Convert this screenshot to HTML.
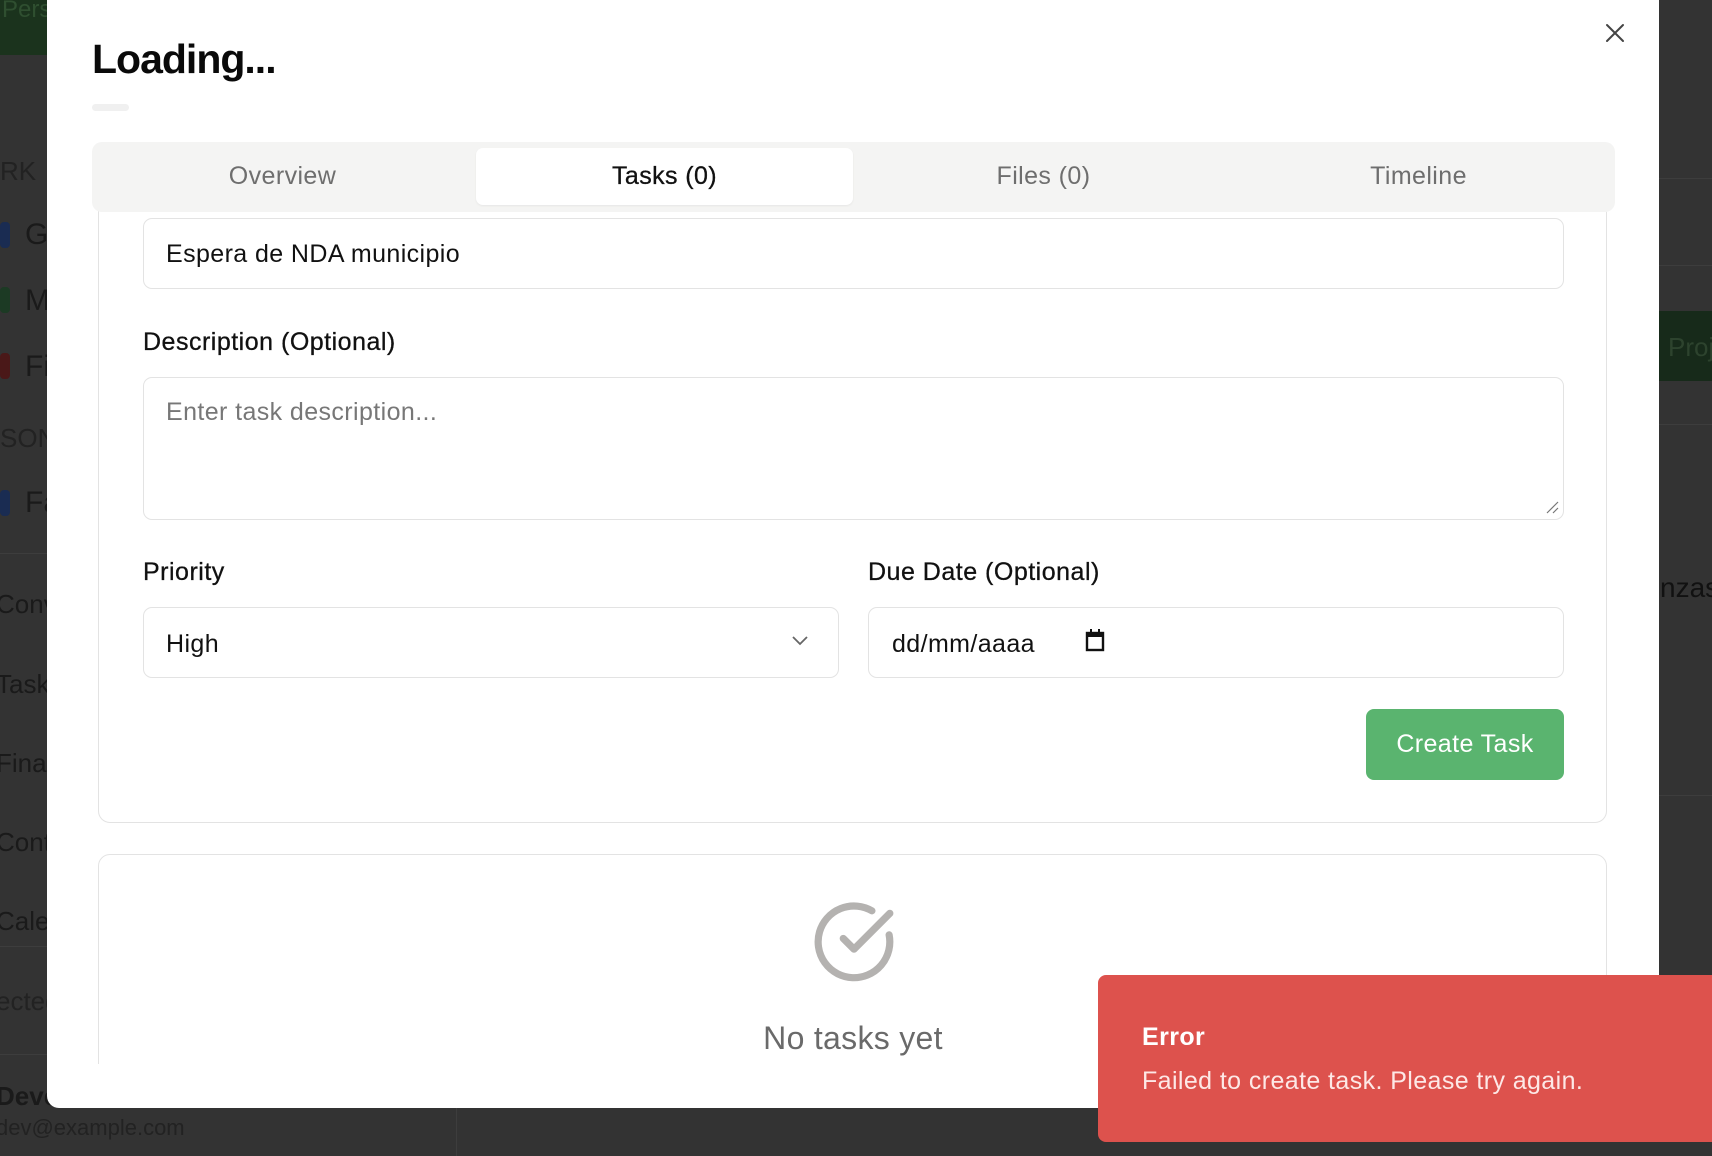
<!DOCTYPE html>
<html><head><meta charset="utf-8"><style>
*{box-sizing:border-box;margin:0;padding:0}
body{width:1712px;height:1156px;overflow:hidden;background:#333;font-family:"Liberation Sans",sans-serif;position:relative}
.a{position:absolute;white-space:nowrap}
.bg{color:#1a1a1a;font-size:26px}
.line{position:absolute;height:1px;background:#3d3d3d}
.modal{position:absolute;left:47px;top:-20px;width:1612px;height:1128px;background:#fff;border-radius:0 0 12px 12px;overflow:hidden}
.box{position:absolute;border:1px solid #e3e3e3;border-radius:9px;background:#fff}
.lbl{position:absolute;font-size:25px;color:#111;letter-spacing:0.5px;-webkit-text-stroke:0.3px #111}
.t{font-size:25px;letter-spacing:0.4px}
</style></head><body>
<div class="a" style="left:0;top:0;width:60px;height:55px;background:#1b331d"></div>
<div class="a" style="left:2px;top:-4px;font-size:24px;color:#2f4f30">Pers</div>
<div class="a bg" style="left:0;top:156px;color:#222">RK</div>
<div class="a" style="left:0;top:222px;width:10px;height:26px;background:#1a2c52;border-radius:4px"></div>
<div class="a bg" style="left:25px;top:218px;font-size:30px">G</div>
<div class="a" style="left:0;top:287px;width:10px;height:26px;background:#1c3a24;border-radius:4px"></div>
<div class="a bg" style="left:25px;top:284px;font-size:30px">M</div>
<div class="a" style="left:0;top:353px;width:10px;height:26px;background:#4a1818;border-radius:4px"></div>
<div class="a bg" style="left:25px;top:350px;font-size:30px">Fi</div>
<div class="a bg" style="left:0;top:423px;color:#222">SON</div>
<div class="a" style="left:0;top:490px;width:10px;height:26px;background:#1a2c52;border-radius:4px"></div>
<div class="a bg" style="left:25px;top:486px;font-size:30px">Fa</div>
<div class="line" style="left:0;top:553px;width:47px"></div>
<div class="a bg" style="left:-4px;top:589px">Conv</div>
<div class="a bg" style="left:-4px;top:669px">Tasks</div>
<div class="a bg" style="left:-4px;top:748px">Finan</div>
<div class="a bg" style="left:-4px;top:827px">Cont</div>
<div class="a bg" style="left:-4px;top:906px">Calen</div>
<div class="line" style="left:0;top:946px;width:47px"></div>
<div class="a bg" style="left:-4px;top:986px;color:#222">ected</div>
<div class="line" style="left:0;top:1054px;width:47px"></div>
<div class="a bg" style="left:-4px;top:1081px;font-weight:bold">Deve</div>
<div class="a" style="left:-4px;top:1115px;font-size:22px;color:#222">dev@example.com</div>
<div class="a" style="left:456px;top:1108px;width:1px;height:48px;background:#3d3d3d"></div>
<div class="line" style="left:1659px;top:178px;width:53px"></div>
<div class="line" style="left:1659px;top:265px;width:53px"></div>
<div class="a" style="left:1659px;top:311px;width:53px;height:70px;background:#172a1a"></div>
<div class="a" style="left:1668px;top:332px;font-size:26px;color:#2d432e">Proj</div>
<div class="line" style="left:1659px;top:424px;width:53px"></div>
<div class="a" style="left:1660px;top:572px;font-size:28px;color:#111">nzas</div>
<div class="line" style="left:1659px;top:795px;width:53px"></div>

<div class="modal">
 <div class="a" style="left:45px;top:56px;font-size:41px;font-weight:bold;color:#0a0a0a;letter-spacing:-1px">Loading...</div>
 <div class="a" style="left:45px;top:124px;width:37px;height:7px;background:#f0f0f0;border-radius:4px"></div>
 <svg class="a" style="left:1556px;top:41px" width="24" height="24" viewBox="0 0 24 24"><path d="M4 4L20 20M20 4L4 20" stroke="#444" stroke-width="2" stroke-linecap="round"/></svg>

 <div class="box" style="left:51px;top:180px;width:1509px;height:663px;border-radius:12px"></div>
 <div class="box" style="left:96px;top:238px;width:1421px;height:71px"></div>
 <div class="a t" style="left:119px;top:260px;color:#111">Espera de NDA municipio</div>
 <div class="lbl" style="left:96px;top:348px">Description (Optional)</div>
 <div class="box" style="left:96px;top:397px;width:1421px;height:143px"></div>
 <div class="a t" style="left:119px;top:418px;color:#777">Enter task description...</div>
 <svg class="a" style="left:1498px;top:520px" width="14" height="14"><path d="M2 13L13 2M8 13L13 8" stroke="#777" stroke-width="1.2"/></svg>
 <div class="lbl" style="left:96px;top:578px">Priority</div>
 <div class="lbl" style="left:821px;top:578px">Due Date (Optional)</div>
 <div class="box" style="left:96px;top:627px;width:696px;height:71px"></div>
 <div class="a t" style="left:119px;top:650px;color:#111">High</div>
 <svg class="a" style="left:744px;top:655px" width="18" height="12"><path d="M2 2L9 9L16 2" stroke="#666" stroke-width="1.8" fill="none"/></svg>
 <div class="box" style="left:821px;top:627px;width:696px;height:71px"></div>
 <div class="a t" style="left:845px;top:650px;color:#111">dd/mm/aaaa</div>
 <svg class="a" style="left:1038px;top:648px" width="20" height="24"><rect x="2" y="5" width="16" height="17" fill="none" stroke="#111" stroke-width="2.4"/><rect x="2" y="5" width="16" height="4" fill="#111"/><path d="M6 1v5M14 1v5" stroke="#111" stroke-width="2"/></svg>
 <div class="a t" style="left:1319px;top:729px;width:198px;height:71px;background:#5ab46f;border-radius:8px;color:#fff;text-align:center;line-height:71px">Create Task</div>

 <div class="a" style="left:45px;top:162px;width:1523px;height:70px;background:#f4f4f3;border-radius:10px"></div>
 <div class="a" style="left:429px;top:168px;width:377px;height:57px;background:#fff;border-radius:7px;box-shadow:0 1px 2px rgba(0,0,0,.06)"></div>
 <div class="a t" style="left:45px;top:182px;width:381px;text-align:center;color:#6e6e6e">Overview</div>
 <div class="a t" style="left:429px;top:182px;width:377px;text-align:center;color:#111;-webkit-text-stroke:0.3px #111">Tasks (0)</div>
 <div class="a t" style="left:806px;top:182px;width:381px;text-align:center;color:#6e6e6e">Files (0)</div>
 <div class="a t" style="left:1181px;top:182px;width:381px;text-align:center;color:#6e6e6e">Timeline</div>

 <div style="position:absolute;left:0;top:874px;width:1612px;height:210px;overflow:hidden">
  <div class="box" style="left:51px;top:0;width:1509px;height:300px;border-radius:12px"></div>
  <svg class="a" style="left:764px;top:45px" width="86" height="86" viewBox="0 0 24 24"><path d="M21.8 10A10 10 0 1 1 17 3.3" fill="none" stroke="#b4b2b0" stroke-width="2" stroke-linecap="round"/><path d="M9 11l3 3L22 4" fill="none" stroke="#b4b2b0" stroke-width="2" stroke-linecap="round" stroke-linejoin="round"/></svg>
  <div class="a" style="left:0;top:166px;width:1612px;text-align:center;font-size:32px;letter-spacing:0.3px;color:#6a6a6a">No tasks yet</div>
 </div>
</div>

<div class="a" style="left:1098px;top:975px;width:640px;height:167px;background:#dd524d;border-radius:8px"></div>
<div class="a t" style="left:1142px;top:1023px;font-weight:bold;color:#fff">Error</div>
<div class="a t" style="left:1142px;top:1067px;color:#fde8e6">Failed to create task. Please try again.</div>
</body></html>
